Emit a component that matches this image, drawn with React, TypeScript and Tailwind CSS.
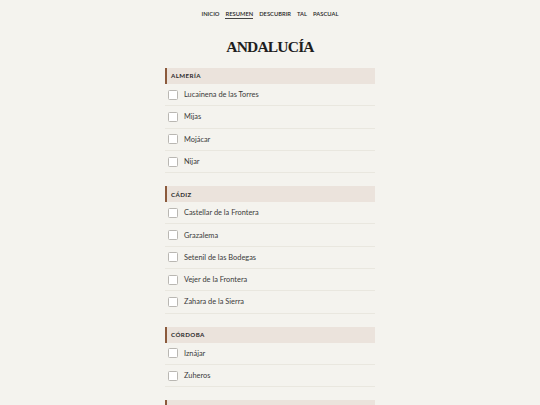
import { useState } from 'react'

const regions = [
  {
    name: 'ALMERÍA',
    towns: ['Lucainena de las Torres', 'Mijas', 'Mojácar', 'Nijar'],
  },
  {
    name: 'CÁDIZ',
    towns: [
      'Castellar de la Frontera',
      'Grazalema',
      'Setenil de las Bodegas',
      'Vejer de la Frontera',
      'Zahara de la Sierra',
    ],
  },
  {
    name: 'CÓRDOBA',
    towns: ['Iznájar', 'Zuheros'],
  },
  {
    name: 'GRANADA',
    towns: ['Capileira', 'Pampaneira'],
  },
]

const navItems = ['INICIO', 'RESUMEN', 'DESCUBRIR', 'TAL', 'PASCUAL']

function TownRow({ name }: { name: string }) {
  const [checked, setChecked] = useState(false)
  return (
    <label className="flex h-[22.3px] cursor-pointer items-center border-b border-[#e9e7df] pl-[3px]">
      <input
        type="checkbox"
        checked={checked}
        onChange={() => setChecked(!checked)}
        className="peer sr-only"
      />
      <span className="h-[10px] w-[10px] rounded-[1.5px] border border-[#b9b7b2] bg-white peer-checked:bg-[#8b5a3c]" />
      <span className="ml-[6px] text-[7.4px] text-[#3a3a3a]">{name}</span>
    </label>
  )
}

export default function App() {
  return (
    <div
      className="h-[405px] overflow-hidden bg-[#f4f3ee] text-[#222]"
      style={{ fontFamily: 'Lato, "Liberation Sans", sans-serif' }}
    >
      <nav className="flex h-[19px] items-end justify-center gap-[6px] text-[5.8px] font-semibold leading-[8px] text-[#1f1f1f]">
        {navItems.map((item) => (
          <span
            key={item}
            className={item === 'RESUMEN' ? 'border-b border-[#444]' : 'border-b border-transparent'}
          >
            {item}
          </span>
        ))}
      </nav>

      <h1
        className="mt-[18px] text-center text-[15.5px] font-bold leading-[20px] text-[#1e1e1e]"
        style={{ fontFamily: '"Liberation Serif", "DejaVu Serif", serif', letterSpacing: '-0.8px' }}
      >
        ANDALUCÍA
      </h1>

      <main className="mx-auto mt-[11px] w-[210px]">
        {regions.map((region) => (
          <section key={region.name} className="mb-[13px]">
            <h2 className="flex h-[16px] items-center border-l-2 border-[#8b5a3c] bg-[#ebe3dc] pl-[4px] text-[6.2px] font-bold tracking-[0.4px] text-[#2a2a2a]">
              {region.name}
            </h2>
            {region.towns.map((town) => (
              <TownRow key={town} name={town} />
            ))}
          </section>
        ))}
      </main>
    </div>
  )
}
